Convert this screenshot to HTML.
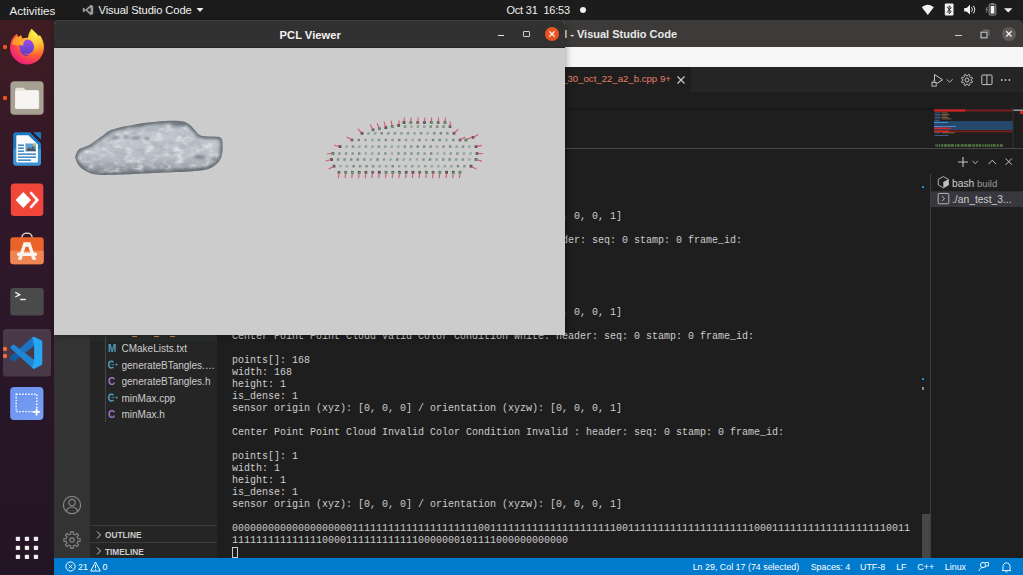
<!DOCTYPE html>
<html><head><meta charset="utf-8">
<style>
*{margin:0;padding:0;box-sizing:border-box}
html,body{width:1023px;height:575px;overflow:hidden;background:#1e1e1e;font-family:"Liberation Sans",sans-serif}
.a{position:absolute}
#topbar{left:0;top:0;width:1023px;height:20px;background:#1c1c1c;color:#f0f0f0;font-size:11px}
#dock{left:0;top:20px;width:54px;height:555px;background:linear-gradient(180deg,#3f1d22 0%,#3a1a26 14%,#301829 32%,#2b1729 55%,#261628 75%,#241526 100%)}
#vsc{left:54px;top:20px;width:969px;height:555px;background:#1e1e1e}
#vtitle{left:0;top:0;width:969px;height:27px;background:#3c3b3a;border-radius:5px 5px 0 0}
#vmenu{left:0;top:27px;width:969px;height:20px;background:#f6f6f6}
#tabs{left:0;top:47px;width:969px;height:25px;background:#252526}
#act{left:0;top:47px;width:36px;height:491px;background:#333333}
#side{left:36px;top:47px;width:127px;height:491px;background:#252526}
#status{left:0;top:538px;width:969px;height:17px;background:#007acc;color:#fff;font-size:9.5px}
#term{left:178px;top:0;font-family:"Liberation Mono",monospace;font-size:10px;line-height:12px;color:#cccccc;white-space:pre}
#pcl{left:54px;top:20px;width:511.3px;height:315.4px;background:#cccccc;border-radius:5px 5px 0 0;overflow:hidden;box-shadow:1px 1px 7px rgba(0,0,0,0.35)}
#ptitle{left:0;top:0;width:512px;height:28px;background:#323131;border-top:1px solid #3b3b3b;border-bottom:1px solid #262626;color:#f2f2f2;font-weight:bold;font-size:11.2px}

#bread{left:0;top:72px;width:969px;height:16px;background:#1e1e1e}
#edshadow{left:0;top:88px;width:880px;height:3px;background:linear-gradient(#141414,#1e1e1e)}
#panelborder{left:0;top:128px;width:969px;height:1px;background:#474747}
#term{left:178px;top:143px}
.cur{display:inline-block;width:6px;height:11px;border:1px solid #cccccc;vertical-align:-2px}

.tr{left:0;width:127px;height:16.5px;font-size:10px;color:#cccccc;white-space:nowrap;overflow:hidden}
.tr .ic{position:absolute;left:18px;top:2px;font-size:10px;width:10px}
.tr .nm{position:absolute;left:31.5px;top:2px;width:94px;overflow:hidden;text-overflow:ellipsis}
.cg{color:#519aba;font-weight:bold}
.tr .ic2{position:absolute;left:17.5px;top:2.8px}
.hd{font-weight:bold;font-size:8.3px;color:#cccccc}
#status span{font-size:8.9px}
</style></head><body>
<div id="topbar" class="a">
  <span class="a" style="left:9.5px;top:3.6px;font-size:11.6px">Activities</span>
  <svg class="a" style="left:81.5px;top:3.6px" width="12" height="12" viewBox="0 0 12 12"><path d="M8.6 0.8 L11.2 2 V10 L8.6 11.2 L3.6 6.6 L1.6 8.2 L0.8 7.7 V4.3 L1.6 3.8 L3.6 5.4 Z M8.6 3.6 L5.4 6 L8.6 8.4 Z" fill="#9a9a9a" fill-rule="evenodd"/></svg>
  <span class="a" style="left:98.5px;top:3.6px;font-size:11.2px;letter-spacing:-0.1px">Visual Studio Code</span>
  <svg class="a" style="left:196px;top:7px" width="8" height="6"><path d="M0.5 1 H7.5 L4 5 Z" fill="#f0f0f0"/></svg>
  <span class="a" style="left:506.5px;top:4.2px;font-size:10.9px;letter-spacing:-0.15px;white-space:pre">Oct 31  16:53</span>
    <div class="a" style="left:580px;top:6.6px;width:6.2px;height:6.2px;border-radius:50%;background:#f0f0f0"></div>
  <svg class="a" style="left:920px;top:3px" width="100" height="14" viewBox="920 3 100 14">
    <path d="M927.8 15 L921.8 7.3 C925.5 3.9 930.1 3.9 933.8 7.3 Z" fill="#f2f2f2"/>
    <rect x="944.8" y="3.6" width="8.7" height="12" rx="1" fill="#f2f2f2"/>
    <path d="M947 6.8 L951.2 11.8 L949.1 13.6 V5.8 L951.2 7.6 L947 12.6" fill="none" stroke="#1c1c1c" stroke-width="0.9"/>
    <path d="M964.2 8 H966.6 L970 4.8 V14.6 L966.6 11.4 H964.2 Z" fill="#f2f2f2"/>
    <path d="M971.5 7.2 C972.6 8.4 972.6 10.6 971.5 11.8 M973.3 5.8 C975.2 7.8 975.2 11.4 973.3 13.4" fill="none" stroke="#f2f2f2" stroke-width="1"/>
    <rect x="989.2" y="4.2" width="6.6" height="10.8" rx="0.9" fill="none" stroke="#b5b5b5" stroke-width="0.8"/>
    <rect x="990.6" y="5.8" width="3.8" height="7.8" fill="#f4f4f4"/>
    <rect x="991" y="3.3" width="3" height="1" fill="#9a9a9a"/>
    <path d="M987.3 7 L985.9 9.6 H987.5 L986.3 12.4" fill="none" stroke="#9a9a9a" stroke-width="0.8"/>
    <path d="M1004 8.2 H1012.4 L1008.2 12.6 Z" fill="#f2f2f2"/>
  </svg>
</div>
<div id="dock" class="a">
  <svg class="a" style="left:0;top:0" width="54" height="555" viewBox="0 20 54 555">
    <defs>
      <radialGradient id="ffg" cx="0.75" cy="0.15" r="1">
        <stop offset="0" stop-color="#fff44f"/><stop offset="0.35" stop-color="#ffb42e"/><stop offset="0.6" stop-color="#ff5a36"/><stop offset="0.85" stop-color="#f22a6e"/><stop offset="1" stop-color="#e31587"/>
      </radialGradient>
      <linearGradient id="ffp" x1="0" y1="0" x2="0" y2="1"><stop offset="0" stop-color="#9d4ce8"/><stop offset="1" stop-color="#5b3fc9"/></linearGradient>
      <linearGradient id="acg" x1="0" y1="0" x2="0" y2="1"><stop offset="0" stop-color="#ea6428"/><stop offset="1" stop-color="#f0823f"/></linearGradient>
      <linearGradient id="ssg" x1="0" y1="0" x2="1" y2="1"><stop offset="0" stop-color="#6a92f0"/><stop offset="1" stop-color="#78a0f2"/></linearGradient>
      <linearGradient id="vsg" x1="0" y1="0" x2="1" y2="0"><stop offset="0" stop-color="#1e7fd0"/><stop offset="1" stop-color="#27a0ee"/></linearGradient>
    </defs>
    <!-- running dots -->
    <circle cx="5" cy="47" r="2.2" fill="#e9541f"/>
    <circle cx="5" cy="98" r="2.2" fill="#e9541f"/>
    <circle cx="5" cy="349" r="2.2" fill="#e9541f"/>
    <circle cx="5" cy="356" r="2.2" fill="#e9541f"/>
    <!-- firefox -->
    <path d="M10 48 C10 43 11.5 39.5 13.5 37 L16.7 33.8 L18.3 37 L21 35.3 L22.2 38.6 C24 37.9 26 37.5 28 37.7 C28.4 34 29.8 31 31.6 28.8 C34.5 31.5 37 34 39 36.2 L39.7 35 C42.6 38.7 44 43 44 47 A17 17 0 0 1 10 48 Z" fill="url(#ffg)"/>
    <path d="M12 44 C13 39 16 36 18.5 37 L21 35.5 L22.5 39 C20 40 18.5 43 18.8 46 C17 45 14 45 12 44 Z" fill="#ffa22b" opacity="0.9"/>
    <circle cx="26.8" cy="46.8" r="7.3" fill="url(#ffp)"/>
    <path d="M22 41.5 C26 39.5 31 40 32.5 42.5 C30.5 42 29 42.5 28.5 43.5 C27 42.5 24 42 22 41.5 Z" fill="#9b47e0"/>
    <path d="M18.5 42.5 C20.5 39.5 23.5 39 25.5 40 C24 41.5 23 43 23.5 45 C21.5 46 19.5 45.5 18.5 42.5 Z" fill="#ffac2e"/>
    <path d="M20 50 C21 55 26 57 30 55.5 C27 55.5 24 54 22 51.5 Z" fill="#5d3fc8"/>
    <!-- files -->
    <rect x="10.4" y="81.2" width="33.2" height="33.6" rx="4" fill="#a7a193"/>
    <path d="M15.2 89.6 a1.8 1.8 0 0 1 1.8 -1.8 h6.6 l2.2 2.2 h11.6 a1.8 1.8 0 0 1 1.8 1.8 v15.6 a1.6 1.6 0 0 1 -1.6 1.6 h-20.8 a1.6 1.6 0 0 1 -1.6 -1.6 z" fill="#e4e1dc"/>
    <path d="M15.2 92.2 a1.6 1.6 0 0 1 1.6 -1.6 h20.4 a1.6 1.6 0 0 1 1.6 1.6 v15 a1.6 1.6 0 0 1 -1.6 1.6 h-20.4 a1.6 1.6 0 0 1 -1.6 -1.6 z" fill="#f6f5f2"/>
    <!-- writer -->
    <linearGradient id="wrg" x1="0" y1="0" x2="0" y2="1"><stop offset="0" stop-color="#1b7ac4"/><stop offset="0.48" stop-color="#1b7ac4"/><stop offset="0.52" stop-color="#3d95d8"/><stop offset="1" stop-color="#3d95d8"/></linearGradient>
    <path d="M16.2 132.2 h13.6 l11.2 11.2 v19.3 a3 3 0 0 1 -3 3 h-21.8 a3 3 0 0 1 -3 -3 v-27.5 a3 3 0 0 1 3 -3 z" fill="url(#wrg)"/>
    <path d="M17.3 135.2 h11 l9.6 9.4 v17 a1 1 0 0 1 -1 1 h-19.6 a1 1 0 0 1 -1 -1 v-25.4 a1 1 0 0 1 1 -1 z" fill="#fbfbfb"/>
    <path d="M33.4 132.2 h6.6 a1 1 0 0 1 1 1 v6.6 z" fill="#1b7ac4"/>
    <rect x="18" y="144.5" width="6" height="1.3" fill="#1f74b8"/>
    <rect x="18" y="147.5" width="6" height="1.3" fill="#1f74b8"/>
    <rect x="18" y="150.5" width="6" height="1.3" fill="#1f74b8"/>
    <rect x="18" y="153.5" width="18" height="1.3" fill="#1f74b8"/>
    <rect x="18" y="156.5" width="18" height="1.3" fill="#1f74b8"/>
    <rect x="18" y="159.5" width="13" height="1.3" fill="#1f74b8"/>
    <rect x="25.5" y="143.5" width="10.5" height="8" fill="#5aa0d8"/>
    <path d="M26 151 l3 -4 l2 2 l2 -3 l3 5 z" fill="#555"/>
    <circle cx="34.5" cy="145" r="1.2" fill="#f5b82e"/>
    <!-- anydesk -->
    <rect x="10.8" y="183.5" width="32.5" height="32.5" rx="3.5" fill="#f1473a"/>
    <path d="M23.3 192 L31 200 L23.3 208 L15.6 200 Z" fill="#fff"/>
    <path d="M29.5 193 L31.5 191.5 L39 200 L31.5 208.5 L29.5 207 L35.5 200 Z" fill="#fff"/>
    <!-- app center -->
    <path d="M21.8 238 C21.8 231.5 32.2 231.5 32.2 238" fill="none" stroke="#f3dccb" stroke-width="1.3"/>
    <rect x="10.3" y="237.3" width="33.4" height="27" rx="3" fill="#e9632b"/>
    <path d="M10.3 250.8 H43.7 V261.3 a3 3 0 0 1 -3 3 H13.3 a3 3 0 0 1 -3 -3 Z" fill="#ef8552"/>
    <path d="M23.6 242.3 H30.4 L36.2 259.8 H32.4 L28.4 246.8 H25.6 L21.6 259.8 H17.8 Z" fill="#fbf3ee"/>
    <rect x="16.9" y="252.6" width="20.2" height="3.4" rx="1.7" fill="#fbf3ee"/>
    <!-- terminal -->
    <rect x="10.3" y="288" width="33.4" height="27.4" rx="3" fill="#4a4a4a"/>
    <path d="M15.3 292.4 L19.8 294.7 L15.3 297" fill="none" stroke="#f0f0f0" stroke-width="1.3"/>
    <rect x="20.2" y="298.8" width="5.6" height="1.4" fill="#f0f0f0"/>
    <!-- vscode highlight -->
    <rect x="3" y="329" width="48" height="47.6" rx="3" fill="#ffffff" fill-opacity="0.15"/>
    <g transform="translate(10.4 336.9) scale(0.318)">
      <path d="M96.46 10.8L75.86.87a6.23 6.23 0 0 0-7.1 1.2L29.4 38.04 12.26 25.03a4.16 4.16 0 0 0-5.32.24L1.43 30.29a4.16 4.16 0 0 0 0 6.16L16.3 50 1.43 63.55a4.16 4.16 0 0 0 0 6.16l5.51 5.01a4.16 4.16 0 0 0 5.32.24l17.14-13.01 39.36 35.95a6.23 6.23 0 0 0 7.1 1.2l20.6-9.92a6.25 6.25 0 0 0 3.54-5.63V16.43a6.25 6.25 0 0 0-3.54-5.63zM75.02 72.7L45.1 50l29.92-22.7v45.4z" fill="#1f86d6" fill-rule="evenodd"/>
      <path d="M1.43 63.55 L16.3 50 L29.4 61.95 L12.26 74.96 a4.16 4.16 0 0 1 -5.32 -.24 L1.43 69.71 a4.16 4.16 0 0 1 0 -6.16 Z" fill="#0f5fa8"/>
      <path d="M29.4 38.04 L68.76 2.07 a6.23 6.23 0 0 1 7.1 -1.2 L75.02 27.3 L45.1 50 Z" fill="#1b74c2"/>
      <path d="M75.86 .87 L96.46 10.8 a6.25 6.25 0 0 1 3.54 5.63 V83.55 a6.25 6.25 0 0 1 -3.54 5.63 L75.86 99.1 a6.23 6.23 0 0 1 -7.1 -1.2 L75.02 72.7 V27.3 L68.76 2.07 a6.23 6.23 0 0 1 7.1 -1.2 Z" fill="#27a6f2"/>
    </g>
    <!-- screenshot -->
    <rect x="10.2" y="387" width="33.2" height="33" rx="4" fill="url(#ssg)"/>
    <rect x="16.2" y="394.2" width="20.6" height="17.4" fill="none" stroke="#fff" stroke-width="1.4" stroke-dasharray="1.5 1.5"/>
    <path d="M36.6 408.4 v7 M33.1 411.9 h7" stroke="#fff" stroke-width="1.7"/>
    <!-- app grid -->
    <g fill="#eeeeee">
      <rect x="15.8" y="536.8" width="4.3" height="4.3" rx="0.8"/><rect x="24.8" y="536.8" width="4.3" height="4.3" rx="0.8"/><rect x="33.8" y="536.8" width="4.3" height="4.3" rx="0.8"/>
      <rect x="15.8" y="545.8" width="4.3" height="4.3" rx="0.8"/><rect x="24.8" y="545.8" width="4.3" height="4.3" rx="0.8"/><rect x="33.8" y="545.8" width="4.3" height="4.3" rx="0.8"/>
      <rect x="15.8" y="554.8" width="4.3" height="4.3" rx="0.8"/><rect x="24.8" y="554.8" width="4.3" height="4.3" rx="0.8"/><rect x="33.8" y="554.8" width="4.3" height="4.3" rx="0.8"/>
    </g>
  </svg>
</div>
<div id="vsc" class="a">
  <div id="vtitle" class="a"><span class="a" style="right:346px;top:8px;font-weight:bold;font-size:11px;color:#e8e8e8;white-space:pre">an_test_30_oct_22_a2_b.cpp - build - Visual Studio Code</span>
    <div class="a" style="left:901px;top:15px;width:7px;height:1.2px;background:#cfcfcf"></div>
    <svg class="a" style="left:925px;top:8px" width="12" height="12"><rect x="2" y="4.2" width="6" height="5.6" fill="none" stroke="#c8c8c8" stroke-width="1.1"/><path d="M4 2.2 H10 V7.8" fill="none" stroke="#8a8a8a" stroke-width="0.8"/></svg>
    <div class="a" style="left:948.4px;top:6.8px;width:13.8px;height:13.8px;border-radius:50%;background:#5c5b5a"></div>
    <svg class="a" style="left:948.4px;top:6.8px" width="14" height="14"><path d="M4.3 4.3 L9.5 9.5 M9.5 4.3 L4.3 9.5" stroke="#f2f2f2" stroke-width="1.3"/></svg>
  </div>
  <div id="vmenu" class="a"></div>
  <div id="tabs" class="a">
    <div class="a" style="left:400px;top:0;width:237px;height:25px;background:#1e1e1e"></div>
    <span class="a" style="left:476.7px;top:6.3px;font-size:9.6px;color:#e77f67;white-space:pre">an_test_30_oct_22_a2_b.cpp</span>
    <span class="a" style="left:606px;top:6.3px;font-size:9.6px;color:#e77f67">9+</span>
    <svg class="a" style="left:622px;top:8px" width="10" height="10"><path d="M1.5 1.5 L8.5 8.5 M8.5 1.5 L1.5 8.5" stroke="#cfcfcf" stroke-width="1.1"/></svg>
    <svg class="a" style="left:876px;top:4px" width="90" height="18" viewBox="930 71 90 18">
      <path d="M934.5 81 V74.5 L942.5 79.8 L937 83.4" fill="none" stroke="#c5c5c5" stroke-width="1"/>
      <rect x="932" y="82.5" width="4.2" height="3.6" fill="none" stroke="#c5c5c5" stroke-width="0.9"/>
      <path d="M933 82.5 V81.5 C933 80.3 935.2 80.3 935.2 81.5 V82.5" fill="none" stroke="#c5c5c5" stroke-width="0.8"/>
      <path d="M946.6 79.3 L949.6 82.2 L952.6 79.3" fill="none" stroke="#c5c5c5" stroke-width="0.9"/>
      <circle cx="967" cy="80" r="2" fill="none" stroke="#c5c5c5" stroke-width="1"/>
      <path d="M972.45 81.31 L971.77 82.93 L970.36 82.52 L969.52 83.36 L969.93 84.77 L968.31 85.45 L967.59 84.16 L966.41 84.16 L965.69 85.45 L964.07 84.77 L964.48 83.36 L963.64 82.52 L962.23 82.93 L961.55 81.31 L962.84 80.59 L962.84 79.41 L961.55 78.69 L962.23 77.07 L963.64 77.48 L964.48 76.64 L964.07 75.23 L965.69 74.55 L966.41 75.84 L967.59 75.84 L968.31 74.55 L969.93 75.23 L969.52 76.64 L970.36 77.48 L971.77 77.07 L972.45 78.69 L971.16 79.41 L971.16 80.59 Z" fill="none" stroke="#c5c5c5" stroke-width="1"/>
      <rect x="981.8" y="75" width="10.2" height="9.6" rx="0.8" fill="none" stroke="#c5c5c5" stroke-width="1"/>
      <path d="M986.9 75 V84.6" stroke="#c5c5c5" stroke-width="1"/>
      <circle cx="1001.8" cy="80" r="0.9" fill="#c5c5c5"/><circle cx="1005.6" cy="80" r="0.9" fill="#c5c5c5"/><circle cx="1009.4" cy="80" r="0.9" fill="#c5c5c5"/>
    </svg>
  </div>
  <div id="bread" class="a"></div>
  <div id="edshadow" class="a"></div>
  <div id="act" class="a">
    <svg class="a" style="left:8px;top:427.5px" width="20" height="20"><circle cx="10" cy="10" r="8.6" fill="none" stroke="#858585" stroke-width="1.2"/><circle cx="10" cy="7.6" r="3.2" fill="none" stroke="#858585" stroke-width="1.2"/><path d="M4.2 16.3 C5.2 13.3 7.3 12 10 12 C12.7 12 14.8 13.3 15.8 16.3" fill="none" stroke="#858585" stroke-width="1.2"/></svg>
    <svg class="a" style="left:8px;top:463.3px" width="20" height="20" viewBox="0 0 20 20"><path d="M18.10 8.72 L18.10 11.28 L15.83 11.40 L15.12 13.13 L16.63 14.82 L14.82 16.63 L13.13 15.12 L11.40 15.83 L11.28 18.10 L8.72 18.10 L8.60 15.83 L6.87 15.12 L5.18 16.63 L3.37 14.82 L4.88 13.13 L4.17 11.40 L1.90 11.28 L1.90 8.72 L4.17 8.60 L4.88 6.87 L3.37 5.18 L5.18 3.37 L6.87 4.88 L8.60 4.17 L8.72 1.90 L11.28 1.90 L11.40 4.17 L13.13 4.88 L14.82 3.37 L16.63 5.18 L15.12 6.87 L15.83 8.60 Z" fill="none" stroke="#858585" stroke-width="1.15"/><circle cx="10" cy="10" r="2.2" fill="none" stroke="#858585" stroke-width="1.15"/></svg>
  </div>
  <div id="side" class="a">
    <div class="a" style="left:0;top:268px;width:127px;height:6px;background:#2a2d2e"></div>
    <div class="a" style="left:42px;top:268.8px;width:5px;height:1.2px;background:#d9884a"></div>
    <div class="a" style="left:64px;top:268.8px;width:5px;height:1.2px;background:#d9884a"></div>
    <div class="a" style="left:80px;top:268.8px;width:5px;height:1.2px;background:#d9884a"></div>
    <div class="a" style="left:14.5px;top:268px;width:1px;height:87px;background:#464646"></div>
    <div class="tr a" style="top:274px"><span class="ic" style="color:#519aba;font-weight:bold">M</span><span class="nm">CMakeLists.txt</span></div>
    <div class="tr a" style="top:290.5px"><svg class="ic2" width="10" height="10" viewBox="0 0 10 10"><path d="M5.6 2.2 C4.9 1.5 4 1.3 3.3 1.3 C1.7 1.3 0.7 2.7 0.7 4.6 C0.7 6.5 1.7 7.9 3.3 7.9 C4 7.9 4.9 7.7 5.6 7" fill="none" stroke="#519aba" stroke-width="1.5"/><path d="M3.3 4.6 H6.3 M7.3 4.6 H9.8 M8.55 3.35 V5.85" stroke="#519aba" stroke-width="0.8"/></svg><span class="nm">generateBTangles.cpp</span></div>
    <div class="tr a" style="top:307px"><span class="ic" style="color:#a074c4;font-weight:bold">C</span><span class="nm">generateBTangles.h</span></div>
    <div class="tr a" style="top:323.5px"><svg class="ic2" width="10" height="10" viewBox="0 0 10 10"><path d="M5.6 2.2 C4.9 1.5 4 1.3 3.3 1.3 C1.7 1.3 0.7 2.7 0.7 4.6 C0.7 6.5 1.7 7.9 3.3 7.9 C4 7.9 4.9 7.7 5.6 7" fill="none" stroke="#519aba" stroke-width="1.5"/><path d="M3.3 4.6 H6.3 M7.3 4.6 H9.8 M8.55 3.35 V5.85" stroke="#519aba" stroke-width="0.8"/></svg><span class="nm">minMax.cpp</span></div>
    <div class="tr a" style="top:340px"><span class="ic" style="color:#a074c4;font-weight:bold">C</span><span class="nm">minMax.h</span></div>
    <div class="a" style="left:0;top:458px;width:127px;height:1px;background:#3c3c3c"></div>
    <svg class="a" style="left:4.5px;top:462.6px" width="8" height="10"><path d="M2 1.5 L5.5 5 L2 8.5" fill="none" stroke="#c5c5c5" stroke-width="1"/></svg>
    <span class="a hd" style="left:15px;top:463px">OUTLINE</span>
    <div class="a" style="left:0;top:474.5px;width:127px;height:1px;background:#3c3c3c"></div>
    <svg class="a" style="left:4.5px;top:479px" width="8" height="10"><path d="M2 1.5 L5.5 5 L2 8.5" fill="none" stroke="#c5c5c5" stroke-width="1"/></svg>
    <span class="a hd" style="left:15px;top:479.5px">TIMELINE</span>
  </div>
  <div id="panelborder" class="a"></div>
  <pre id="term" class="a">
points[]: 168
width: 168
height: 1
is_dense: 1
sensor origin (xyz): [0, 0, 0] / orientation (xyzw): [0, 0, 0, 1]

Center Point Point Cloud Valid Color Condition Red: header: seq: 0 stamp: 0 frame_id:

points[]: 168
width: 168
height: 1
is_dense: 1
sensor origin (xyz): [0, 0, 0] / orientation (xyzw): [0, 0, 0, 1]

Center Point Point Cloud Valid Color Condition White: header: seq: 0 stamp: 0 frame_id:

points[]: 168
width: 168
height: 1
is_dense: 1
sensor origin (xyz): [0, 0, 0] / orientation (xyzw): [0, 0, 0, 1]

Center Point Point Cloud Invalid Color Condition Invalid : header: seq: 0 stamp: 0 frame_id:

points[]: 1
width: 1
height: 1
is_dense: 1
sensor origin (xyz): [0, 0, 0] / orientation (xyzw): [0, 0, 0, 1]

00000000000000000000111111111111111111111001111111111111111111110011111111111111111111100011111111111111111110011
11111111111111100001111111111110000000101111000000000000
<span class="cur"></span></pre>

  <!-- minimap (vsc coords) -->
  <svg class="a" style="left:876px;top:86px" width="93" height="44" viewBox="930 106 93 44">
    <rect x="934" y="109.5" width="79" height="2" fill="#7a1f1f"/>
    <rect x="934" y="109.5" width="31" height="2" fill="#d42424"/>
    <rect x="1013" y="109.5" width="10" height="1.5" fill="#9a9a9a"/>
    <rect x="1020" y="111" width="3" height="3" fill="#d42424"/>
    <g fill="#4c6d9a" opacity="0.9">
      <rect x="934.5" y="112.5" width="6" height="0.8"/><rect x="934.5" y="114" width="6" height="0.8"/><rect x="934.5" y="115.5" width="6" height="0.8"/><rect x="934.5" y="117" width="6" height="0.8"/><rect x="934.5" y="118.5" width="6" height="0.8"/><rect x="934.5" y="120" width="5" height="0.8"/>
    </g>
    <g fill="#9a7a52" opacity="0.9">
      <rect x="941.5" y="112.5" width="6" height="0.8"/><rect x="941.5" y="114" width="8" height="0.8"/><rect x="941.5" y="115.5" width="6" height="0.8"/><rect x="941.5" y="117" width="7" height="0.8"/><rect x="941.5" y="118.5" width="10" height="0.8"/>
    </g>
    <rect x="934" y="121" width="79" height="9" fill="#264f78" opacity="0.85"/>
    <rect x="934" y="122" width="14" height="1" fill="#4a8ad0"/>
    <rect x="934" y="126" width="22" height="1" fill="#4a8ad0"/>
    <rect x="934" y="127.5" width="17" height="1.6" fill="#d42424"/>
    <rect x="934" y="130.5" width="79" height="1.8" fill="#7a1f1f"/>
    <rect x="934" y="130.5" width="15" height="1.8" fill="#d42424"/>
    <rect x="934.5" y="132.5" width="6" height="0.8" fill="#4c6d9a"/><rect x="942" y="132.5" width="13" height="0.8" fill="#9a7a52"/>
    <rect x="934.5" y="135" width="14" height="0.8" fill="#4c6d9a"/>
    <g opacity="0.9"><rect x="935.5" y="144.2" width="1" height="2.6" fill="#5a7e45"/><rect x="937.0" y="144.2" width="1" height="2.6" fill="#5a7e45"/><rect x="938.7" y="144.2" width="1.5" height="2.6" fill="#5a7e45"/><rect x="941.2" y="144.2" width="2" height="2.6" fill="#5a7e45"/><rect x="943.9" y="144.2" width="3" height="2.6" fill="#5a7e45"/><rect x="947.4" y="144.2" width="3" height="2.6" fill="#5a7e45"/><rect x="950.9" y="144.2" width="3" height="2.6" fill="#5a7e45"/><rect x="954.9" y="144.2" width="1.5" height="2.6" fill="#5a7e45"/><rect x="957.1" y="144.2" width="2.5" height="2.6" fill="#5a7e45"/><rect x="960.6" y="144.2" width="3" height="2.6" fill="#5a7e45"/><rect x="964.3" y="144.2" width="3" height="2.6" fill="#5a7e45"/><rect x="968.0" y="144.2" width="3" height="2.6" fill="#5a7e45"/><rect x="971.7" y="144.2" width="1" height="2.6" fill="#5a7e45"/><rect x="973.2" y="144.2" width="2" height="2.6" fill="#5a7e45"/><rect x="975.9" y="144.2" width="2" height="2.6" fill="#5a7e45"/><rect x="978.6" y="144.2" width="2.5" height="2.6" fill="#5a7e45"/><rect x="982.1" y="144.2" width="1.5" height="2.6" fill="#5a7e45"/><rect x="984.6" y="144.2" width="1.5" height="2.6" fill="#5a7e45"/><rect x="986.6" y="144.2" width="1.5" height="2.6" fill="#5a7e45"/><rect x="988.6" y="144.2" width="1.5" height="2.6" fill="#5a7e45"/><rect x="990.8" y="144.2" width="1.5" height="2.6" fill="#5a7e45"/><rect x="992.8" y="144.2" width="3" height="2.6" fill="#5a7e45"/><rect x="996.8" y="144.2" width="2" height="2.6" fill="#5a7e45"/><rect x="999.8" y="144.2" width="3" height="2.6" fill="#5a7e45"/></g>
    <rect x="1012.5" y="106" width="1" height="42" fill="#333"/>
  </svg>
  <!-- panel actions -->
  <svg class="a" style="left:876px;top:132px" width="93" height="90" viewBox="930 152 93 90">
    <path d="M958 162 H968 M963 157 V167" stroke="#c5c5c5" stroke-width="1.1"/>
    <path d="M972.5 161 L975.2 163.6 L977.9 161" fill="none" stroke="#c5c5c5" stroke-width="0.9"/>
    <path d="M988.5 164.2 L992.3 160.2 L996.1 164.2" fill="none" stroke="#c5c5c5" stroke-width="1"/>
    <path d="M1005.6 158.4 L1012 164.8 M1012 158.4 L1005.6 164.8" stroke="#c5c5c5" stroke-width="1"/>
    <path d="M929.5 174 V242" stroke="#3e3e3e" stroke-width="1"/>
    <rect x="930" y="191.3" width="93" height="15.8" fill="#37373d"/>
    <path d="M943.3 176.6 L948.4 179.3 V185 L943.3 187.8 L938.3 185 V179.3 Z" fill="none" stroke="#bdbdbd" stroke-width="0.9"/>
    <path d="M943.3 182 L948.4 179.3 V185 L943.3 187.8 Z" fill="#bdbdbd"/>
    <rect x="938.2" y="193.4" width="10.6" height="10.4" rx="1" fill="none" stroke="#c5c5c5" stroke-width="0.9"/>
    <path d="M942 196.2 L944.6 198.6 L942 201" fill="none" stroke="#c5c5c5" stroke-width="0.9"/>
    
  </svg>
  <span class="a" style="left:898px;top:157.5px;font-size:10.3px;color:#cccccc">bash</span>
  <span class="a" style="left:923px;top:158px;font-size:9.6px;color:#9d9d9d">build</span>
  <span class="a" style="left:898px;top:173.5px;font-size:10.3px;color:#cccccc;white-space:pre">./an_test_3...</span>
  <!-- terminal scrollbar -->
  <div class="a" style="left:868px;top:494px;width:7.6px;height:44px;background:#474747"></div>
  <div class="a" style="left:868.3px;top:166px;width:1.6px;height:1.8px;background:#2188d6"></div>
  <div class="a" style="left:868px;top:357.5px;width:1.6px;height:2.5px;background:#2188d6"></div>
  <div class="a" style="left:868px;top:367px;width:1.6px;height:2.5px;background:#8a8a8a"></div>
  <div class="a" style="left:875.5px;top:154px;width:1px;height:384px;background:#3e3e3e"></div>
  <div id="status" class="a">
    <svg class="a" style="left:11px;top:3px" width="11" height="11"><circle cx="5.5" cy="5.5" r="4.6" fill="none" stroke="#fff" stroke-width="1"/><path d="M3.6 3.6 L7.4 7.4 M7.4 3.6 L3.6 7.4" stroke="#fff" stroke-width="0.9"/></svg>
    <span class="a" style="left:24px;top:3.5px">21</span>
    <svg class="a" style="left:36px;top:2.5px" width="11" height="11"><path d="M5.5 1 L10.3 10 H0.7 Z" fill="none" stroke="#fff" stroke-width="0.95" stroke-linejoin="round"/><path d="M5.5 4 V7.2 M5.5 8.2 V9" stroke="#fff" stroke-width="0.9"/></svg>
    <span class="a" style="left:48.4px;top:3.5px">0</span>
    <span class="a" style="left:638.7px;top:3.5px;white-space:pre">Ln 29, Col 17 (74 selected)</span>
    <span class="a" style="left:756.7px;top:3.5px;white-space:pre">Spaces: 4</span>
    <span class="a" style="left:806px;top:3.5px">UTF-8</span>
    <span class="a" style="left:842.2px;top:3.5px">LF</span>
    <span class="a" style="left:863.3px;top:3.5px">C++</span>
    <span class="a" style="left:890.8px;top:3.5px">Linux</span>
    <svg class="a" style="left:924px;top:3px" width="11" height="11"><circle cx="5" cy="4" r="2.6" fill="none" stroke="#fff" stroke-width="0.9"/><path d="M1 10 C1.5 7.5 3 6.6 5 6.6 M7 1.5 H10.5 V5 H8.5 L7.2 6.3" fill="none" stroke="#fff" stroke-width="0.9"/></svg>
    <svg class="a" style="left:947px;top:2.5px" width="11" height="12"><path d="M2 8.8 V5.5 C2 3.3 3.5 1.8 5.5 1.8 C7.5 1.8 9 3.3 9 5.5 V8.8 L10 9.6 H1 Z M4.3 10.5 C4.6 11.2 6.4 11.2 6.7 10.5" fill="none" stroke="#fff" stroke-width="0.9"/></svg>
  </div>
</div>
<div id="pcl" class="a">
  <div id="ptitle" class="a"><span class="a" style="left:225.6px;top:8.4px">PCL Viewer</span>
    <div class="a" style="left:443.8px;top:14.2px;width:6.4px;height:1.2px;background:#e6e6e6"></div>
    <div class="a" style="left:469.2px;top:10px;width:6.8px;height:6px;border:1.1px solid #d0d0d0;border-radius:1px"></div>
    <div class="a" style="left:490.9px;top:5.8px;width:14px;height:14px;border-radius:50%;background:#e95420"></div>
    <svg class="a" style="left:490.9px;top:5.8px" width="14" height="14"><path d="M4.4 4.4 L9.6 9.6 M9.6 4.4 L4.4 9.6" stroke="#fff" stroke-width="1.3"/></svg>
  </div>
  <!--PCLSVG--><svg class="a" style="left:0;top:27px" width="512" height="288" viewBox="0 27 512 288">
<defs>
<linearGradient id="bg1" x1="0" y1="0" x2="0" y2="1"><stop offset="0" stop-color="#a9b0b8"/><stop offset="0.3" stop-color="#c2c8cf"/><stop offset="0.7" stop-color="#b6bcc3"/><stop offset="1" stop-color="#7c828a"/></linearGradient>
<filter id="tex" x="0" y="0" width="1" height="1"><feTurbulence type="fractalNoise" baseFrequency="0.08 0.14" numOctaves="3" seed="11"/><feColorMatrix type="matrix" values="0 0 0 0 0.40  0 0 0 0 0.44  0 0 0 0 0.48  3 0 0 0 -1.4"/><feGaussianBlur stdDeviation="0.5"/></filter>
<filter id="tex2" x="0" y="0" width="1" height="1"><feTurbulence type="fractalNoise" baseFrequency="0.1 0.16" numOctaves="3" seed="5"/><feColorMatrix type="matrix" values="0 0 0 0 0.90  0 0 0 0 0.92  0 0 0 0 0.95  -2.6 0 0 0 1.45"/><feGaussianBlur stdDeviation="0.6"/></filter>
<filter id="bl2"><feGaussianBlur stdDeviation="1.6"/></filter>
<filter id="bl1"><feGaussianBlur stdDeviation="0.9"/></filter>
<clipPath id="bc"><path d="M21.5 135.4 C22.2 133.8 22.9 130.9 25.4 129.1 C27.9 127.3 32.7 126.5 36.3 124.4 C39.9 122.3 43.6 119.1 47.3 116.6 C51.0 114.1 53.0 111.4 58.2 109.5 C63.4 107.5 71.3 106.2 78.6 104.9 C85.9 103.6 94.2 102.4 102.0 101.7 C109.8 101.0 120.0 100.6 125.5 101.0 C131.0 101.4 132.3 102.5 134.9 104.0 C137.5 105.5 138.9 108.3 141.0 110.3 C143.1 112.3 144.0 114.8 147.4 115.8 C150.8 116.9 158.0 116.1 161.4 116.6 C164.8 117.1 166.5 116.6 167.7 118.9 C168.9 121.2 168.8 127.2 168.5 130.7 C168.2 134.2 167.9 137.1 166.0 140.0 C164.1 142.9 161.0 146.1 156.8 147.9 C152.6 149.7 148.8 150.2 141.0 151.0 C133.2 151.8 120.2 152.1 109.8 152.6 C99.4 153.1 89.0 153.7 78.6 154.1 C68.2 154.5 54.6 155.2 47.3 154.9 C40.0 154.7 38.4 154.0 34.8 152.6 C31.2 151.2 27.6 148.7 25.4 146.3 C23.2 144.0 22.2 140.3 21.5 138.5 C20.8 136.7 20.8 137.0 21.5 135.4 Z"/></clipPath>
</defs>
<path d="M21.5 135.4 C22.2 133.8 22.9 130.9 25.4 129.1 C27.9 127.3 32.7 126.5 36.3 124.4 C39.9 122.3 43.6 119.1 47.3 116.6 C51.0 114.1 53.0 111.4 58.2 109.5 C63.4 107.5 71.3 106.2 78.6 104.9 C85.9 103.6 94.2 102.4 102.0 101.7 C109.8 101.0 120.0 100.6 125.5 101.0 C131.0 101.4 132.3 102.5 134.9 104.0 C137.5 105.5 138.9 108.3 141.0 110.3 C143.1 112.3 144.0 114.8 147.4 115.8 C150.8 116.9 158.0 116.1 161.4 116.6 C164.8 117.1 166.5 116.6 167.7 118.9 C168.9 121.2 168.8 127.2 168.5 130.7 C168.2 134.2 167.9 137.1 166.0 140.0 C164.1 142.9 161.0 146.1 156.8 147.9 C152.6 149.7 148.8 150.2 141.0 151.0 C133.2 151.8 120.2 152.1 109.8 152.6 C99.4 153.1 89.0 153.7 78.6 154.1 C68.2 154.5 54.6 155.2 47.3 154.9 C40.0 154.7 38.4 154.0 34.8 152.6 C31.2 151.2 27.6 148.7 25.4 146.3 C23.2 144.0 22.2 140.3 21.5 138.5 C20.8 136.7 20.8 137.0 21.5 135.4 Z" fill="url(#bg1)"/>
<g clip-path="url(#bc)">
<rect x="20" y="95" width="155" height="65" fill="#fff" filter="url(#tex2)" opacity="0.7"/><rect x="20" y="95" width="155" height="65" fill="#fff" filter="url(#tex)" opacity="0.8"/>
<g filter="url(#bl1)" fill="#5f666e" opacity="0.55">
<ellipse cx="62" cy="118" rx="4" ry="1.8"/><ellipse cx="72" cy="117" rx="3" ry="1.5"/><ellipse cx="82" cy="118" rx="5" ry="1.8"/><ellipse cx="93" cy="118.5" rx="3" ry="1.6"/>
<ellipse cx="124" cy="104" rx="9" ry="2.5"/><ellipse cx="86" cy="104" rx="5" ry="1.5"/>
<ellipse cx="146" cy="137" rx="6" ry="2"/><ellipse cx="160" cy="139" rx="3" ry="1.5"/>

</g>
<path d="M21.5 135.4 C22.2 133.8 22.9 130.9 25.4 129.1 C27.9 127.3 32.7 126.5 36.3 124.4 C39.9 122.3 43.6 119.1 47.3 116.6 C51.0 114.1 53.0 111.4 58.2 109.5 C63.4 107.5 71.3 106.2 78.6 104.9 C85.9 103.6 94.2 102.4 102.0 101.7 C109.8 101.0 120.0 100.6 125.5 101.0 C131.0 101.4 132.3 102.5 134.9 104.0 C137.5 105.5 138.9 108.3 141.0 110.3 C143.1 112.3 144.0 114.8 147.4 115.8 C150.8 116.9 158.0 116.1 161.4 116.6 C164.8 117.1 166.5 116.6 167.7 118.9 C168.9 121.2 168.8 127.2 168.5 130.7 C168.2 134.2 167.9 137.1 166.0 140.0 C164.1 142.9 161.0 146.1 156.8 147.9 C152.6 149.7 148.8 150.2 141.0 151.0 C133.2 151.8 120.2 152.1 109.8 152.6 C99.4 153.1 89.0 153.7 78.6 154.1 C68.2 154.5 54.6 155.2 47.3 154.9 C40.0 154.7 38.4 154.0 34.8 152.6 C31.2 151.2 27.6 148.7 25.4 146.3 C23.2 144.0 22.2 140.3 21.5 138.5 C20.8 136.7 20.8 137.0 21.5 135.4 Z" fill="none" stroke="#5c6269" stroke-width="5" filter="url(#bl2)" opacity="0.85"/>
</g>

<g>
<rect x="348.6" y="101.1" width="2.8" height="2.8" fill="#4e5053"/>
<rect x="355.4" y="101.1" width="2.8" height="2.8" fill="#66686b"/>
<rect x="362.3" y="101.1" width="2.8" height="2.8" fill="#66686b"/>
<rect x="369.1" y="101.1" width="2.8" height="2.8" fill="#4e5053"/>
<rect x="375.9" y="101.1" width="2.8" height="2.8" fill="#5a5c5f"/>
<rect x="382.8" y="101.1" width="2.8" height="2.8" fill="#66686b"/>
<rect x="389.6" y="101.1" width="2.8" height="2.8" fill="#5a5c5f"/>
<rect x="317.6" y="108.4" width="2.8" height="2.8" fill="#66686b"/>
<rect x="324.0" y="107.3" width="2.8" height="2.8" fill="#66686b"/>
<rect x="330.4" y="106.2" width="2.8" height="2.8" fill="#4e5053"/>
<rect x="336.9" y="105.1" width="2.8" height="2.8" fill="#66686b"/>
<rect x="343.3" y="104.0" width="2.8" height="2.8" fill="#4e5053"/>
<rect x="349.9" y="105.4" width="2.4" height="2.4" fill="#7d8185"/>
<rect x="356.3" y="105.4" width="2.4" height="2.4" fill="#9ea1a5"/>
<rect x="362.7" y="105.4" width="2.4" height="2.4" fill="#92959a"/>
<rect x="369.1" y="105.4" width="2.4" height="2.4" fill="#92959a"/>
<rect x="375.6" y="105.4" width="2.4" height="2.4" fill="#7d8185"/>
<rect x="382.0" y="105.4" width="2.4" height="2.4" fill="#7d8185"/>
<rect x="388.4" y="105.4" width="2.4" height="2.4" fill="#7d8185"/>
<rect x="394.6" y="105.2" width="2.8" height="2.8" fill="#66686b"/>
<rect x="306.6" y="111.9" width="2.8" height="2.8" fill="#4e5053"/>
<rect x="313.4" y="112.1" width="2.4" height="2.4" fill="#92959a"/>
<rect x="319.9" y="112.1" width="2.4" height="2.4" fill="#92959a"/>
<rect x="326.5" y="112.1" width="2.4" height="2.4" fill="#7d8185"/>
<rect x="333.1" y="112.1" width="2.4" height="2.4" fill="#868a8e"/>
<rect x="339.7" y="112.1" width="2.4" height="2.4" fill="#868a8e"/>
<rect x="346.2" y="112.1" width="2.4" height="2.4" fill="#92959a"/>
<rect x="352.8" y="112.1" width="2.4" height="2.4" fill="#868a8e"/>
<rect x="359.4" y="112.1" width="2.4" height="2.4" fill="#9ea1a5"/>
<rect x="365.9" y="112.1" width="2.4" height="2.4" fill="#868a8e"/>
<rect x="372.5" y="112.1" width="2.4" height="2.4" fill="#9ea1a5"/>
<rect x="379.1" y="112.1" width="2.4" height="2.4" fill="#7d8185"/>
<rect x="385.7" y="112.1" width="2.4" height="2.4" fill="#7d8185"/>
<rect x="392.2" y="112.1" width="2.4" height="2.4" fill="#7d8185"/>
<rect x="398.6" y="111.9" width="2.8" height="2.8" fill="#5a5c5f"/>
<rect x="296.6" y="118.6" width="2.8" height="2.8" fill="#66686b"/>
<rect x="303.6" y="118.8" width="2.4" height="2.4" fill="#7d8185"/>
<rect x="310.3" y="118.8" width="2.4" height="2.4" fill="#92959a"/>
<rect x="317.1" y="118.8" width="2.4" height="2.4" fill="#9ea1a5"/>
<rect x="323.8" y="118.8" width="2.4" height="2.4" fill="#868a8e"/>
<rect x="330.6" y="118.8" width="2.4" height="2.4" fill="#868a8e"/>
<rect x="337.3" y="118.8" width="2.4" height="2.4" fill="#92959a"/>
<rect x="344.1" y="118.8" width="2.4" height="2.4" fill="#7d8185"/>
<rect x="350.8" y="118.8" width="2.4" height="2.4" fill="#92959a"/>
<rect x="357.6" y="118.8" width="2.4" height="2.4" fill="#9ea1a5"/>
<rect x="364.3" y="118.8" width="2.4" height="2.4" fill="#7d8185"/>
<rect x="371.1" y="118.8" width="2.4" height="2.4" fill="#9ea1a5"/>
<rect x="377.8" y="118.8" width="2.4" height="2.4" fill="#7d8185"/>
<rect x="384.6" y="118.8" width="2.4" height="2.4" fill="#7d8185"/>
<rect x="391.3" y="118.8" width="2.4" height="2.4" fill="#9ea1a5"/>
<rect x="398.1" y="118.8" width="2.4" height="2.4" fill="#7d8185"/>
<rect x="404.6" y="118.6" width="2.8" height="2.8" fill="#66686b"/>
<rect x="284.6" y="125.2" width="2.8" height="2.8" fill="#4e5053"/>
<rect x="291.3" y="125.4" width="2.4" height="2.4" fill="#9ea1a5"/>
<rect x="297.8" y="125.4" width="2.4" height="2.4" fill="#868a8e"/>
<rect x="304.2" y="125.4" width="2.4" height="2.4" fill="#9ea1a5"/>
<rect x="310.7" y="125.4" width="2.4" height="2.4" fill="#92959a"/>
<rect x="317.2" y="125.4" width="2.4" height="2.4" fill="#9ea1a5"/>
<rect x="323.7" y="125.4" width="2.4" height="2.4" fill="#868a8e"/>
<rect x="330.1" y="125.4" width="2.4" height="2.4" fill="#92959a"/>
<rect x="336.6" y="125.4" width="2.4" height="2.4" fill="#9ea1a5"/>
<rect x="343.1" y="125.4" width="2.4" height="2.4" fill="#9ea1a5"/>
<rect x="349.6" y="125.4" width="2.4" height="2.4" fill="#868a8e"/>
<rect x="356.0" y="125.4" width="2.4" height="2.4" fill="#868a8e"/>
<rect x="362.5" y="125.4" width="2.4" height="2.4" fill="#7d8185"/>
<rect x="369.0" y="125.4" width="2.4" height="2.4" fill="#7d8185"/>
<rect x="375.5" y="125.4" width="2.4" height="2.4" fill="#868a8e"/>
<rect x="381.9" y="125.4" width="2.4" height="2.4" fill="#9ea1a5"/>
<rect x="388.4" y="125.4" width="2.4" height="2.4" fill="#868a8e"/>
<rect x="394.9" y="125.4" width="2.4" height="2.4" fill="#7d8185"/>
<rect x="401.4" y="125.4" width="2.4" height="2.4" fill="#92959a"/>
<rect x="407.8" y="125.4" width="2.4" height="2.4" fill="#868a8e"/>
<rect x="414.3" y="125.4" width="2.4" height="2.4" fill="#9ea1a5"/>
<rect x="420.6" y="125.2" width="2.8" height="2.8" fill="#5a5c5f"/>
<rect x="277.6" y="132.1" width="2.8" height="2.8" fill="#5a5c5f"/>
<rect x="284.3" y="132.3" width="2.4" height="2.4" fill="#868a8e"/>
<rect x="290.9" y="132.3" width="2.4" height="2.4" fill="#868a8e"/>
<rect x="297.4" y="132.3" width="2.4" height="2.4" fill="#868a8e"/>
<rect x="304.0" y="132.3" width="2.4" height="2.4" fill="#7d8185"/>
<rect x="310.5" y="132.3" width="2.4" height="2.4" fill="#9ea1a5"/>
<rect x="317.1" y="132.3" width="2.4" height="2.4" fill="#9ea1a5"/>
<rect x="323.6" y="132.3" width="2.4" height="2.4" fill="#92959a"/>
<rect x="330.2" y="132.3" width="2.4" height="2.4" fill="#868a8e"/>
<rect x="336.7" y="132.3" width="2.4" height="2.4" fill="#9ea1a5"/>
<rect x="343.3" y="132.3" width="2.4" height="2.4" fill="#868a8e"/>
<rect x="349.8" y="132.3" width="2.4" height="2.4" fill="#868a8e"/>
<rect x="356.3" y="132.3" width="2.4" height="2.4" fill="#868a8e"/>
<rect x="362.9" y="132.3" width="2.4" height="2.4" fill="#868a8e"/>
<rect x="369.4" y="132.3" width="2.4" height="2.4" fill="#92959a"/>
<rect x="376.0" y="132.3" width="2.4" height="2.4" fill="#7d8185"/>
<rect x="382.5" y="132.3" width="2.4" height="2.4" fill="#9ea1a5"/>
<rect x="389.1" y="132.3" width="2.4" height="2.4" fill="#9ea1a5"/>
<rect x="395.6" y="132.3" width="2.4" height="2.4" fill="#92959a"/>
<rect x="402.2" y="132.3" width="2.4" height="2.4" fill="#868a8e"/>
<rect x="408.7" y="132.3" width="2.4" height="2.4" fill="#9ea1a5"/>
<rect x="415.3" y="132.3" width="2.4" height="2.4" fill="#9ea1a5"/>
<rect x="421.6" y="132.1" width="2.8" height="2.8" fill="#5a5c5f"/>
<rect x="276.1" y="138.1" width="2.8" height="2.8" fill="#4e5053"/>
<rect x="282.9" y="138.3" width="2.4" height="2.4" fill="#7d8185"/>
<rect x="289.4" y="138.3" width="2.4" height="2.4" fill="#7d8185"/>
<rect x="296.0" y="138.3" width="2.4" height="2.4" fill="#7d8185"/>
<rect x="302.6" y="138.3" width="2.4" height="2.4" fill="#7d8185"/>
<rect x="309.1" y="138.3" width="2.4" height="2.4" fill="#868a8e"/>
<rect x="315.7" y="138.3" width="2.4" height="2.4" fill="#9ea1a5"/>
<rect x="322.3" y="138.3" width="2.4" height="2.4" fill="#7d8185"/>
<rect x="328.8" y="138.3" width="2.4" height="2.4" fill="#92959a"/>
<rect x="335.4" y="138.3" width="2.4" height="2.4" fill="#9ea1a5"/>
<rect x="342.0" y="138.3" width="2.4" height="2.4" fill="#7d8185"/>
<rect x="348.6" y="138.3" width="2.4" height="2.4" fill="#9ea1a5"/>
<rect x="355.1" y="138.3" width="2.4" height="2.4" fill="#9ea1a5"/>
<rect x="361.7" y="138.3" width="2.4" height="2.4" fill="#9ea1a5"/>
<rect x="368.3" y="138.3" width="2.4" height="2.4" fill="#868a8e"/>
<rect x="374.8" y="138.3" width="2.4" height="2.4" fill="#7d8185"/>
<rect x="381.4" y="138.3" width="2.4" height="2.4" fill="#9ea1a5"/>
<rect x="388.0" y="138.3" width="2.4" height="2.4" fill="#868a8e"/>
<rect x="394.5" y="138.3" width="2.4" height="2.4" fill="#7d8185"/>
<rect x="401.1" y="138.3" width="2.4" height="2.4" fill="#92959a"/>
<rect x="407.7" y="138.3" width="2.4" height="2.4" fill="#868a8e"/>
<rect x="414.2" y="138.3" width="2.4" height="2.4" fill="#9ea1a5"/>
<rect x="420.6" y="138.1" width="2.8" height="2.8" fill="#5a5c5f"/>
<rect x="278.6" y="144.8" width="2.8" height="2.8" fill="#5a5c5f"/>
<rect x="285.3" y="145.0" width="2.4" height="2.4" fill="#9ea1a5"/>
<rect x="291.8" y="145.0" width="2.4" height="2.4" fill="#9ea1a5"/>
<rect x="298.4" y="145.0" width="2.4" height="2.4" fill="#7d8185"/>
<rect x="304.9" y="145.0" width="2.4" height="2.4" fill="#868a8e"/>
<rect x="311.4" y="145.0" width="2.4" height="2.4" fill="#868a8e"/>
<rect x="317.9" y="145.0" width="2.4" height="2.4" fill="#868a8e"/>
<rect x="324.5" y="145.0" width="2.4" height="2.4" fill="#9ea1a5"/>
<rect x="331.0" y="145.0" width="2.4" height="2.4" fill="#9ea1a5"/>
<rect x="337.5" y="145.0" width="2.4" height="2.4" fill="#7d8185"/>
<rect x="344.0" y="145.0" width="2.4" height="2.4" fill="#9ea1a5"/>
<rect x="350.6" y="145.0" width="2.4" height="2.4" fill="#9ea1a5"/>
<rect x="357.1" y="145.0" width="2.4" height="2.4" fill="#92959a"/>
<rect x="363.6" y="145.0" width="2.4" height="2.4" fill="#9ea1a5"/>
<rect x="370.1" y="145.0" width="2.4" height="2.4" fill="#92959a"/>
<rect x="376.7" y="145.0" width="2.4" height="2.4" fill="#9ea1a5"/>
<rect x="383.2" y="145.0" width="2.4" height="2.4" fill="#9ea1a5"/>
<rect x="389.7" y="145.0" width="2.4" height="2.4" fill="#9ea1a5"/>
<rect x="396.2" y="145.0" width="2.4" height="2.4" fill="#9ea1a5"/>
<rect x="402.8" y="145.0" width="2.4" height="2.4" fill="#7d8185"/>
<rect x="409.3" y="145.0" width="2.4" height="2.4" fill="#868a8e"/>
<rect x="415.6" y="144.8" width="2.8" height="2.8" fill="#4e5053"/>
<rect x="283.6" y="150.9" width="2.8" height="2.8" fill="#66686b"/>
<rect x="290.3" y="150.9" width="2.8" height="2.8" fill="#66686b"/>
<rect x="297.0" y="150.9" width="2.8" height="2.8" fill="#66686b"/>
<rect x="303.8" y="150.9" width="2.8" height="2.8" fill="#4e5053"/>
<rect x="310.5" y="150.9" width="2.8" height="2.8" fill="#5a5c5f"/>
<rect x="317.2" y="150.9" width="2.8" height="2.8" fill="#66686b"/>
<rect x="323.9" y="150.9" width="2.8" height="2.8" fill="#4e5053"/>
<rect x="330.7" y="150.9" width="2.8" height="2.8" fill="#66686b"/>
<rect x="337.4" y="150.9" width="2.8" height="2.8" fill="#5a5c5f"/>
<rect x="344.1" y="150.9" width="2.8" height="2.8" fill="#4e5053"/>
<rect x="350.8" y="150.9" width="2.8" height="2.8" fill="#5a5c5f"/>
<rect x="357.5" y="150.9" width="2.8" height="2.8" fill="#4e5053"/>
<rect x="364.3" y="150.9" width="2.8" height="2.8" fill="#66686b"/>
<rect x="371.0" y="150.9" width="2.8" height="2.8" fill="#5a5c5f"/>
<rect x="377.7" y="150.9" width="2.8" height="2.8" fill="#66686b"/>
<rect x="384.4" y="150.9" width="2.8" height="2.8" fill="#66686b"/>
<rect x="391.2" y="150.9" width="2.8" height="2.8" fill="#4e5053"/>
<rect x="397.9" y="150.9" width="2.8" height="2.8" fill="#4e5053"/>
<rect x="404.6" y="150.9" width="2.8" height="2.8" fill="#66686b"/>
<rect x="410.6" y="118.6" width="2.8" height="2.8" fill="#5a5c5f"/>
<rect x="417.6" y="116.0" width="2.8" height="2.8" fill="#5a5c5f"/>
<path d="M350.0 102.5 l0.4 -5.0" stroke="#d44d66" stroke-width="1.1" opacity="0.9"/>
<path d="M356.8 102.5 l0.4 -5.0" stroke="#d44d66" stroke-width="1.1" opacity="0.9"/>
<path d="M355.3 104.0 l3 -2.4" stroke="#55cc66" stroke-width="0.9"/>
<path d="M363.7 102.5 l0.4 -5.0" stroke="#d44d66" stroke-width="1.1" opacity="0.9"/>
<path d="M370.5 102.5 l0.4 -5.0" stroke="#d44d66" stroke-width="1.1" opacity="0.9"/>
<path d="M377.3 102.5 l0.4 -5.0" stroke="#d44d66" stroke-width="1.1" opacity="0.9"/>
<path d="M375.8 104.0 l3 -2.4" stroke="#55cc66" stroke-width="0.9"/>
<path d="M384.2 102.5 l0.4 -5.0" stroke="#d44d66" stroke-width="1.1" opacity="0.9"/>
<path d="M391.0 102.5 l0.4 -5.0" stroke="#d44d66" stroke-width="1.1" opacity="0.9"/>
<path d="M389.5 104.0 l3 -2.4" stroke="#55cc66" stroke-width="0.9"/>
<path d="M319.0 109.8 l-2.9 -5.2" stroke="#d44d66" stroke-width="1.1" opacity="0.9"/>
<path d="M325.4 108.7 l-2.3 -5.5" stroke="#d44d66" stroke-width="1.1" opacity="0.9"/>
<path d="M323.9 110.2 l3 -2.4" stroke="#55cc66" stroke-width="0.9"/>
<path d="M331.8 107.6 l-1.7 -5.7" stroke="#d44d66" stroke-width="1.1" opacity="0.9"/>
<path d="M338.2 106.5 l-1.1 -5.9" stroke="#d44d66" stroke-width="1.1" opacity="0.9"/>
<path d="M336.8 108.0 l3 -2.4" stroke="#55cc66" stroke-width="0.9"/>
<path d="M344.7 105.4 l0.4 -5.0" stroke="#d44d66" stroke-width="1.1" opacity="0.9"/>
<path d="M349.5 107.9 l2.8 -2" stroke="#58c868" stroke-width="0.8" opacity="0.6"/>
<path d="M362.3 107.9 l2.8 -2" stroke="#58c868" stroke-width="0.8" opacity="0.6"/>
<path d="M375.1 107.9 l2.8 -2" stroke="#58c868" stroke-width="0.8" opacity="0.6"/>
<path d="M388.0 107.9 l2.8 -2" stroke="#58c868" stroke-width="0.8" opacity="0.6"/>
<path d="M396.0 106.6 l0.4 -5.0" stroke="#d44d66" stroke-width="1.1" opacity="0.9"/>
<path d="M308.0 113.3 l-4.0 -4.5" stroke="#d44d66" stroke-width="1.1" opacity="0.9"/>
<path d="M313.0 114.6 l2.8 -2" stroke="#58c868" stroke-width="0.8" opacity="0.6"/>
<path d="M319.5 114.6 l2.8 -2" stroke="#58c868" stroke-width="0.8" opacity="0.6"/>
<path d="M332.7 114.6 l2.8 -2" stroke="#58c868" stroke-width="0.8" opacity="0.6"/>
<path d="M339.3 114.6 l2.8 -2" stroke="#58c868" stroke-width="0.8" opacity="0.6"/>
<path d="M345.8 114.6 l2.8 -2" stroke="#58c868" stroke-width="0.8" opacity="0.6"/>
<path d="M352.4 114.6 l2.8 -2" stroke="#58c868" stroke-width="0.8" opacity="0.6"/>
<path d="M359.0 114.6 l2.8 -2" stroke="#58c868" stroke-width="0.8" opacity="0.6"/>
<path d="M365.5 114.6 l2.8 -2" stroke="#58c868" stroke-width="0.8" opacity="0.6"/>
<path d="M372.1 114.6 l2.8 -2" stroke="#58c868" stroke-width="0.8" opacity="0.6"/>
<path d="M378.7 114.6 l2.8 -2" stroke="#58c868" stroke-width="0.8" opacity="0.6"/>
<path d="M391.8 114.6 l2.8 -2" stroke="#58c868" stroke-width="0.8" opacity="0.6"/>
<path d="M400.0 113.3 l4.3 -4.2" stroke="#d44d66" stroke-width="1.1" opacity="0.9"/>
<path d="M298.0 120.0 l-5.2 -3.0" stroke="#d44d66" stroke-width="1.1" opacity="0.9"/>
<path d="M309.9 121.3 l2.8 -2" stroke="#58c868" stroke-width="0.8" opacity="0.6"/>
<path d="M316.6 121.3 l2.8 -2" stroke="#58c868" stroke-width="0.8" opacity="0.6"/>
<path d="M323.4 121.3 l2.8 -2" stroke="#58c868" stroke-width="0.8" opacity="0.6"/>
<path d="M336.9 121.3 l2.8 -2" stroke="#58c868" stroke-width="0.8" opacity="0.6"/>
<path d="M350.4 121.3 l2.8 -2" stroke="#58c868" stroke-width="0.8" opacity="0.6"/>
<path d="M384.1 121.3 l2.8 -2" stroke="#58c868" stroke-width="0.8" opacity="0.6"/>
<path d="M390.9 121.3 l2.8 -2" stroke="#58c868" stroke-width="0.8" opacity="0.6"/>
<path d="M397.6 121.3 l2.8 -2" stroke="#58c868" stroke-width="0.8" opacity="0.6"/>
<path d="M406.0 120.0 l5.2 -3.0" stroke="#d44d66" stroke-width="1.1" opacity="0.9"/>
<path d="M286.0 126.6 l-5.9 -1.3" stroke="#d44d66" stroke-width="1.1" opacity="0.9"/>
<path d="M290.9 127.9 l2.8 -2" stroke="#58c868" stroke-width="0.8" opacity="0.6"/>
<path d="M303.8 127.9 l2.8 -2" stroke="#58c868" stroke-width="0.8" opacity="0.6"/>
<path d="M310.3 127.9 l2.8 -2" stroke="#58c868" stroke-width="0.8" opacity="0.6"/>
<path d="M316.8 127.9 l2.8 -2" stroke="#58c868" stroke-width="0.8" opacity="0.6"/>
<path d="M323.3 127.9 l2.8 -2" stroke="#58c868" stroke-width="0.8" opacity="0.6"/>
<path d="M329.7 127.9 l2.8 -2" stroke="#58c868" stroke-width="0.8" opacity="0.6"/>
<path d="M336.2 127.9 l2.8 -2" stroke="#58c868" stroke-width="0.8" opacity="0.6"/>
<path d="M342.7 127.9 l2.8 -2" stroke="#58c868" stroke-width="0.8" opacity="0.6"/>
<path d="M349.2 127.9 l2.8 -2" stroke="#58c868" stroke-width="0.8" opacity="0.6"/>
<path d="M355.6 127.9 l2.8 -2" stroke="#58c868" stroke-width="0.8" opacity="0.6"/>
<path d="M368.6 127.9 l2.8 -2" stroke="#58c868" stroke-width="0.8" opacity="0.6"/>
<path d="M375.1 127.9 l2.8 -2" stroke="#58c868" stroke-width="0.8" opacity="0.6"/>
<path d="M388.0 127.9 l2.8 -2" stroke="#58c868" stroke-width="0.8" opacity="0.6"/>
<path d="M401.0 127.9 l2.8 -2" stroke="#58c868" stroke-width="0.8" opacity="0.6"/>
<path d="M407.4 127.9 l2.8 -2" stroke="#58c868" stroke-width="0.8" opacity="0.6"/>
<path d="M413.9 127.9 l2.8 -2" stroke="#58c868" stroke-width="0.8" opacity="0.6"/>
<path d="M422.0 126.6 l5.9 -1.2" stroke="#d44d66" stroke-width="1.1" opacity="0.9"/>
<path d="M279.0 133.5 l-6.0 0.3" stroke="#d44d66" stroke-width="1.1" opacity="0.9"/>
<path d="M277.5 135.0 l3 -2.4" stroke="#55cc66" stroke-width="0.9"/>
<path d="M283.9 134.8 l2.8 -2" stroke="#58c868" stroke-width="0.8" opacity="0.6"/>
<path d="M290.5 134.8 l2.8 -2" stroke="#58c868" stroke-width="0.8" opacity="0.6"/>
<path d="M303.6 134.8 l2.8 -2" stroke="#58c868" stroke-width="0.8" opacity="0.6"/>
<path d="M316.7 134.8 l2.8 -2" stroke="#58c868" stroke-width="0.8" opacity="0.6"/>
<path d="M323.2 134.8 l2.8 -2" stroke="#58c868" stroke-width="0.8" opacity="0.6"/>
<path d="M329.8 134.8 l2.8 -2" stroke="#58c868" stroke-width="0.8" opacity="0.6"/>
<path d="M342.9 134.8 l2.8 -2" stroke="#58c868" stroke-width="0.8" opacity="0.6"/>
<path d="M349.4 134.8 l2.8 -2" stroke="#58c868" stroke-width="0.8" opacity="0.6"/>
<path d="M355.9 134.8 l2.8 -2" stroke="#58c868" stroke-width="0.8" opacity="0.6"/>
<path d="M362.5 134.8 l2.8 -2" stroke="#58c868" stroke-width="0.8" opacity="0.6"/>
<path d="M369.0 134.8 l2.8 -2" stroke="#58c868" stroke-width="0.8" opacity="0.6"/>
<path d="M395.2 134.8 l2.8 -2" stroke="#58c868" stroke-width="0.8" opacity="0.6"/>
<path d="M401.8 134.8 l2.8 -2" stroke="#58c868" stroke-width="0.8" opacity="0.6"/>
<path d="M408.3 134.8 l2.8 -2" stroke="#58c868" stroke-width="0.8" opacity="0.6"/>
<path d="M414.9 134.8 l2.8 -2" stroke="#58c868" stroke-width="0.8" opacity="0.6"/>
<path d="M423.0 133.5 l6.0 0.3" stroke="#d44d66" stroke-width="1.1" opacity="0.9"/>
<path d="M277.5 139.5 l-5.8 1.5" stroke="#d44d66" stroke-width="1.1" opacity="0.9"/>
<path d="M282.5 140.8 l2.8 -2" stroke="#58c868" stroke-width="0.8" opacity="0.6"/>
<path d="M289.0 140.8 l2.8 -2" stroke="#58c868" stroke-width="0.8" opacity="0.6"/>
<path d="M295.6 140.8 l2.8 -2" stroke="#58c868" stroke-width="0.8" opacity="0.6"/>
<path d="M302.2 140.8 l2.8 -2" stroke="#58c868" stroke-width="0.8" opacity="0.6"/>
<path d="M308.7 140.8 l2.8 -2" stroke="#58c868" stroke-width="0.8" opacity="0.6"/>
<path d="M315.3 140.8 l2.8 -2" stroke="#58c868" stroke-width="0.8" opacity="0.6"/>
<path d="M321.9 140.8 l2.8 -2" stroke="#58c868" stroke-width="0.8" opacity="0.6"/>
<path d="M335.0 140.8 l2.8 -2" stroke="#58c868" stroke-width="0.8" opacity="0.6"/>
<path d="M341.6 140.8 l2.8 -2" stroke="#58c868" stroke-width="0.8" opacity="0.6"/>
<path d="M348.1 140.8 l2.8 -2" stroke="#58c868" stroke-width="0.8" opacity="0.6"/>
<path d="M354.7 140.8 l2.8 -2" stroke="#58c868" stroke-width="0.8" opacity="0.6"/>
<path d="M367.9 140.8 l2.8 -2" stroke="#58c868" stroke-width="0.8" opacity="0.6"/>
<path d="M374.4 140.8 l2.8 -2" stroke="#58c868" stroke-width="0.8" opacity="0.6"/>
<path d="M381.0 140.8 l2.8 -2" stroke="#58c868" stroke-width="0.8" opacity="0.6"/>
<path d="M387.6 140.8 l2.8 -2" stroke="#58c868" stroke-width="0.8" opacity="0.6"/>
<path d="M394.1 140.8 l2.8 -2" stroke="#58c868" stroke-width="0.8" opacity="0.6"/>
<path d="M400.7 140.8 l2.8 -2" stroke="#58c868" stroke-width="0.8" opacity="0.6"/>
<path d="M407.3 140.8 l2.8 -2" stroke="#58c868" stroke-width="0.8" opacity="0.6"/>
<path d="M422.0 139.5 l5.8 1.6" stroke="#d44d66" stroke-width="1.1" opacity="0.9"/>
<path d="M420.5 141.0 l3 -2.4" stroke="#55cc66" stroke-width="0.9"/>
<path d="M280.0 146.2 l-5.3 2.8" stroke="#d44d66" stroke-width="1.1" opacity="0.9"/>
<path d="M291.4 147.5 l2.8 -2" stroke="#58c868" stroke-width="0.8" opacity="0.6"/>
<path d="M304.5 147.5 l2.8 -2" stroke="#58c868" stroke-width="0.8" opacity="0.6"/>
<path d="M311.0 147.5 l2.8 -2" stroke="#58c868" stroke-width="0.8" opacity="0.6"/>
<path d="M317.5 147.5 l2.8 -2" stroke="#58c868" stroke-width="0.8" opacity="0.6"/>
<path d="M324.1 147.5 l2.8 -2" stroke="#58c868" stroke-width="0.8" opacity="0.6"/>
<path d="M330.6 147.5 l2.8 -2" stroke="#58c868" stroke-width="0.8" opacity="0.6"/>
<path d="M343.6 147.5 l2.8 -2" stroke="#58c868" stroke-width="0.8" opacity="0.6"/>
<path d="M350.2 147.5 l2.8 -2" stroke="#58c868" stroke-width="0.8" opacity="0.6"/>
<path d="M356.7 147.5 l2.8 -2" stroke="#58c868" stroke-width="0.8" opacity="0.6"/>
<path d="M363.2 147.5 l2.8 -2" stroke="#58c868" stroke-width="0.8" opacity="0.6"/>
<path d="M376.3 147.5 l2.8 -2" stroke="#58c868" stroke-width="0.8" opacity="0.6"/>
<path d="M389.3 147.5 l2.8 -2" stroke="#58c868" stroke-width="0.8" opacity="0.6"/>
<path d="M395.8 147.5 l2.8 -2" stroke="#58c868" stroke-width="0.8" opacity="0.6"/>
<path d="M408.9 147.5 l2.8 -2" stroke="#58c868" stroke-width="0.8" opacity="0.6"/>
<path d="M417.0 146.2 l5.2 2.9" stroke="#d44d66" stroke-width="1.1" opacity="0.9"/>
<path d="M285.0 152.3 l-0.6 5.8" stroke="#d44d66" stroke-width="1.1" opacity="0.9"/>
<path d="M291.7 152.3 l-0.6 5.8" stroke="#d44d66" stroke-width="1.1" opacity="0.9"/>
<path d="M290.2 153.8 l3 -2.4" stroke="#55cc66" stroke-width="0.9"/>
<path d="M298.4 152.3 l-0.6 5.8" stroke="#d44d66" stroke-width="1.1" opacity="0.9"/>
<path d="M296.9 153.8 l3 -2.4" stroke="#55cc66" stroke-width="0.9"/>
<path d="M305.2 152.3 l-0.6 5.8" stroke="#d44d66" stroke-width="1.1" opacity="0.9"/>
<path d="M303.7 153.8 l3 -2.4" stroke="#55cc66" stroke-width="0.9"/>
<path d="M311.9 152.3 l-0.6 5.8" stroke="#d44d66" stroke-width="1.1" opacity="0.9"/>
<path d="M318.6 152.3 l-0.6 5.8" stroke="#d44d66" stroke-width="1.1" opacity="0.9"/>
<path d="M325.3 152.3 l-0.6 5.8" stroke="#d44d66" stroke-width="1.1" opacity="0.9"/>
<path d="M332.1 152.3 l-0.6 5.8" stroke="#d44d66" stroke-width="1.1" opacity="0.9"/>
<path d="M330.6 153.8 l3 -2.4" stroke="#55cc66" stroke-width="0.9"/>
<path d="M338.8 152.3 l-0.6 5.8" stroke="#d44d66" stroke-width="1.1" opacity="0.9"/>
<path d="M337.3 153.8 l3 -2.4" stroke="#55cc66" stroke-width="0.9"/>
<path d="M345.5 152.3 l-0.6 5.8" stroke="#d44d66" stroke-width="1.1" opacity="0.9"/>
<path d="M344.0 153.8 l3 -2.4" stroke="#55cc66" stroke-width="0.9"/>
<path d="M352.2 152.3 l-0.6 5.8" stroke="#d44d66" stroke-width="1.1" opacity="0.9"/>
<path d="M358.9 152.3 l-0.6 5.8" stroke="#d44d66" stroke-width="1.1" opacity="0.9"/>
<path d="M365.7 152.3 l-0.6 5.8" stroke="#d44d66" stroke-width="1.1" opacity="0.9"/>
<path d="M372.4 152.3 l-0.6 5.8" stroke="#d44d66" stroke-width="1.1" opacity="0.9"/>
<path d="M370.9 153.8 l3 -2.4" stroke="#55cc66" stroke-width="0.9"/>
<path d="M379.1 152.3 l-0.6 5.8" stroke="#d44d66" stroke-width="1.1" opacity="0.9"/>
<path d="M385.8 152.3 l-0.6 5.8" stroke="#d44d66" stroke-width="1.1" opacity="0.9"/>
<path d="M384.3 153.8 l3 -2.4" stroke="#55cc66" stroke-width="0.9"/>
<path d="M392.6 152.3 l-0.6 5.8" stroke="#d44d66" stroke-width="1.1" opacity="0.9"/>
<path d="M399.3 152.3 l-0.6 5.8" stroke="#d44d66" stroke-width="1.1" opacity="0.9"/>
<path d="M397.8 153.8 l3 -2.4" stroke="#55cc66" stroke-width="0.9"/>
<path d="M406.0 152.3 l-0.6 5.8" stroke="#d44d66" stroke-width="1.1" opacity="0.9"/>
<path d="M404.5 153.8 l3 -2.4" stroke="#55cc66" stroke-width="0.9"/>
<path d="M412.0 120.0 l5.3 -2.7" stroke="#d44d66" stroke-width="1.1" opacity="0.9"/>
<path d="M410.5 121.5 l3 -2.4" stroke="#55cc66" stroke-width="0.9"/>
<path d="M419.0 117.4 l5.2 -2.9" stroke="#d44d66" stroke-width="1.1" opacity="0.9"/>
</g>
</svg><!--/PCLSVG-->
</div>
</body></html>
